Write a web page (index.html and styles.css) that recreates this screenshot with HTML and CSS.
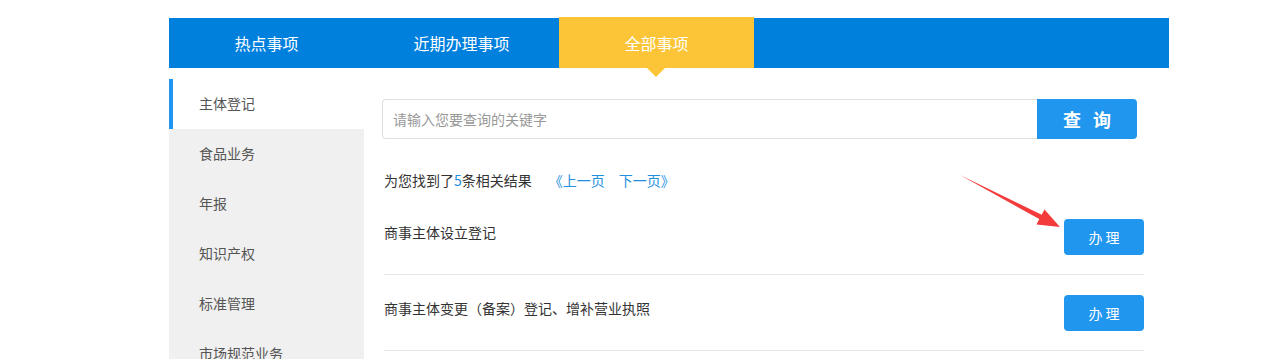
FILE: index.html
```html
<!DOCTYPE html>
<html lang="zh-CN">
<head>
<meta charset="utf-8">
<title>事项</title>
<link rel="stylesheet" href="styles.css">
</head>
<body>
<div class="page">
  <div class="nav">
    <div class="tab">热点事项</div>
    <div class="tab">近期办理事项</div>
    <div class="tab active">全部事项</div>
  </div>
  <div class="body">
    <ul class="side">
      <li class="on">主体登记</li>
      <li>食品业务</li>
      <li>年报</li>
      <li>知识产权</li>
      <li>标准管理</li>
      <li>市场规范业务</li>
    </ul>
    <div class="main">
      <div class="search">
        <div class="input">请输入您要查询的关键字</div>
        <div class="sbtn">查 询</div>
      </div>
      <div class="summary">
        <span>为您找到了<em>5</em>条相关结果</span>
        <a class="prev">《上一页</a>
        <a class="next">下一页》</a>
      </div>
      <div class="rows">
        <div class="row"><span class="name">商事主体设立登记</span><span class="btn">办理</span></div>
        <div class="row"><span class="name">商事主体变更（备案）登记、增补营业执照</span><span class="btn">办理</span></div>
      </div>
    </div>
  </div>
</div>
<svg class="arrow" width="1277" height="359" viewBox="0 0 1277 359">
  <polygon points="960,175 1041.7,214.7 1044.5,209.5 1060,227 1036.5,224.5 1039.3,219.1" fill="#f43b3b"/>
</svg>
</body>
</html>
```
FILE: styles.css
```css
* { box-sizing: border-box; }
html, body { margin: 0; padding: 0; background: #fff; }
body {
  position: relative;
  height: 359px;
  overflow: hidden;
  font-family: "Noto Sans CJK SC", "Microsoft YaHei", sans-serif;
  color: #333;
}
.page { width: 1000px; margin-left: 169px; }
.nav {
  display: flex;
  margin-top: 18px;
  height: 50px;
  background: #0080dd;
}
.tab {
  width: 195px;
  height: 50px;
  color: #fff;
  font-size: 16px;
  display: flex;
  align-items: center;
  justify-content: center;
}
.tab.active {
  position: relative;
  background: #fcc537;
  margin-top: -1px;
  height: 51px;
}
.tab.active::after {
  content: "";
  position: absolute;
  left: 88px;
  bottom: -9px;
  border-left: 9px solid transparent;
  border-right: 9px solid transparent;
  border-top: 9px solid #fcc537;
}
.body { display: flex; margin-top: 11px; }
.side {
  list-style: none;
  margin: 0;
  padding: 0;
  width: 195px;
  background: #f0f0f0;
}
.side li {
  height: 50px;
  line-height: 48px;
  padding-left: 30px;
  font-size: 14px;
  color: #555;
}
.side li.on {
  background: #fff;
  border-left: 4px solid #2196f0;
  padding-left: 26px;
}
.main { padding: 20px 0 0 18px; width: 805px; }
.search { display: flex; width: 755px; height: 40px; }
.input {
  flex: 1;
  border: 1px solid #e0e0e0;
  border-right: none;
  border-radius: 4px 0 0 4px;
  padding-left: 10px;
  line-height: 38px;
  font-size: 14px;
  color: #999;
}
.sbtn {
  width: 100px;
  background: #2196ee;
  color: #fff;
  border-radius: 0 4px 4px 0;
  font-size: 18px;
  font-weight: bold;
  text-align: center;
  line-height: 40px;
  letter-spacing: 4px;
  padding-left: 4px;
}
.summary {
  display: flex;
  padding: 31px 0 9px 2px;
  line-height: 20px;
  font-size: 14px;
}
.summary em { font-style: normal; color: #1f8fe0; }
.summary a { color: #1f8fe0; }
.summary .prev { margin-left: 17px; }
.summary .next { margin-left: 14px; }
.rows { margin-left: 2px; width: 760px; }
.row {
  display: flex;
  align-items: center;
  justify-content: space-between;
  height: 76px;
  border-bottom: 1px solid #e5e5e5;
  font-size: 14px;
}
.row .name { margin-top: -9px; }
.btn {
  width: 80px;
  height: 36px;
  line-height: 36px;
  background: #2196ee;
  color: #fff;
  border-radius: 4px;
  text-align: center;
  font-size: 14px;
  letter-spacing: 3px;
  padding-left: 3px;
}
.arrow { position: absolute; left: 0; top: 0; pointer-events: none; }
```
